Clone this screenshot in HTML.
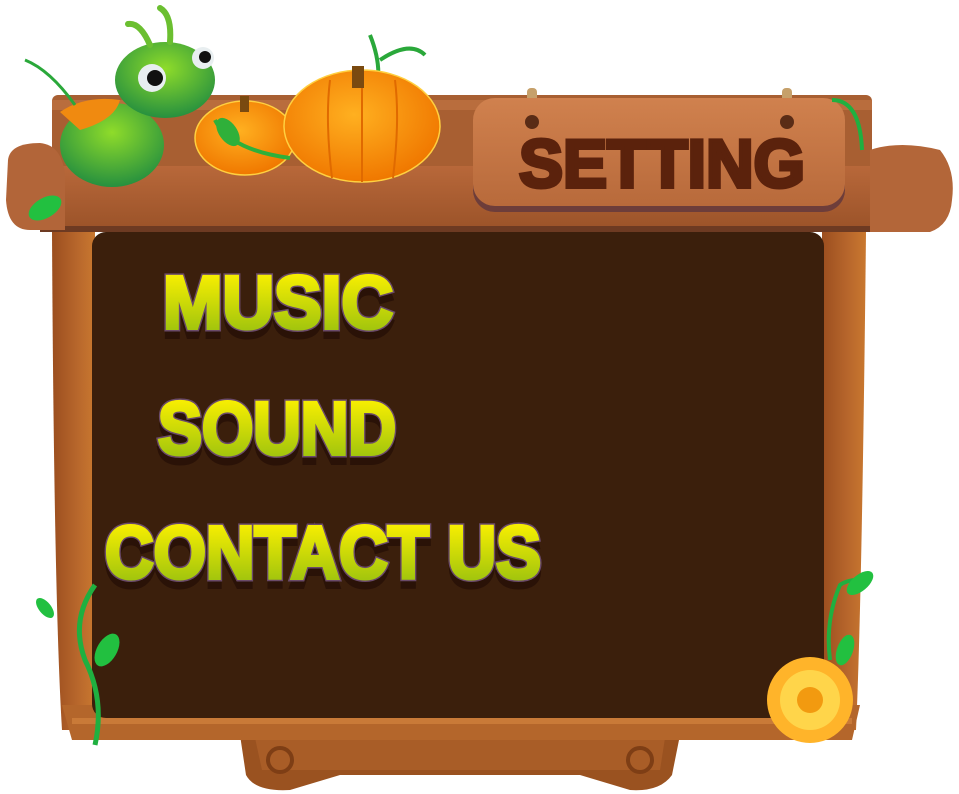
<!DOCTYPE html>
<html><head><meta charset="utf-8"><style>
html,body{margin:0;padding:0;background:#fff;width:959px;height:794px;overflow:hidden}
svg{display:block}
</style></head><body>
<svg width="959" height="794" viewBox="0 0 959 794" xmlns="http://www.w3.org/2000/svg">
<defs>
<linearGradient id="wood" x1="0" y1="0" x2="0" y2="1"><stop offset="0" stop-color="#b8683a"/><stop offset="1" stop-color="#9a5228"/></linearGradient>
<linearGradient id="woodv" x1="0" y1="0" x2="1" y2="0"><stop offset="0" stop-color="#9b4e1f"/><stop offset="0.6" stop-color="#b8672c"/><stop offset="1" stop-color="#c9782f"/></linearGradient>
<linearGradient id="sign" x1="0" y1="0" x2="0" y2="1"><stop offset="0" stop-color="#d0814e"/><stop offset="1" stop-color="#b86a3b"/></linearGradient>
<linearGradient id="txt" x1="0" y1="0" x2="0" y2="1"><stop offset="0.1" stop-color="#fff200"/><stop offset="1" stop-color="#8dbb10"/></linearGradient>
<radialGradient id="pump" cx="0.45" cy="0.4" r="0.6"><stop offset="0" stop-color="#ffb020"/><stop offset="1" stop-color="#f07800"/></radialGradient>
<radialGradient id="cat" cx="0.5" cy="0.35" r="0.7"><stop offset="0" stop-color="#8fdc2a"/><stop offset="1" stop-color="#1e8a40"/></radialGradient>
</defs>

<path d="M240 735 H680 L672 775 Q660 792 630 790 L580 775 H340 L290 790 Q255 792 246 775 Z" fill="#9a5220"/>
<path d="M255 738 H665 L660 770 H262 Z" fill="#a95d27"/>
<circle cx="280" cy="760" r="12" fill="none" stroke="#7e3e15" stroke-width="4"/>
<circle cx="640" cy="760" r="12" fill="none" stroke="#7e3e15" stroke-width="4"/>

<path d="M52 232 H95 V730 H62 Q54 600 52 232 Z" fill="url(#woodv)"/>
<path d="M822 232 H866 Q862 600 856 730 H822 Z" fill="url(#woodv)"/>
<path d="M62 705 H860 L852 740 H72 Z" fill="#b4662b"/>
<rect x="72" y="718" width="780" height="6" fill="#c97a38"/>
<rect x="92" y="232" width="732" height="486" rx="14" fill="#3b1f0c"/>

<rect x="52" y="95" width="820" height="80" rx="6" fill="#a85f32"/>
<rect x="52" y="100" width="820" height="10" fill="#b96d3d"/>
<rect x="40" y="166" width="860" height="66" rx="6" fill="url(#wood)"/>
<rect x="40" y="226" width="860" height="6" fill="#6d3a22"/>
<path d="M8 160 Q10 143 40 143 Q62 145 65 175 V230 H30 Q8 230 6 200 Z" fill="#b26539"/>
<path d="M870 150 Q900 140 940 150 Q956 170 952 200 Q950 225 930 232 H870 Z" fill="#b36639"/>

<rect x="527" y="88" width="10" height="28" rx="4" fill="#c6a06a"/>
<rect x="782" y="88" width="10" height="28" rx="4" fill="#c6a06a"/>
<rect x="473" y="100" width="372" height="112" rx="22" fill="#6d3d3a"/>
<rect x="473" y="98" width="372" height="108" rx="22" fill="url(#sign)"/>
<circle cx="532" cy="122" r="7" fill="#5a2c16"/>
<circle cx="787" cy="122" r="7" fill="#5a2c16"/>
<text x="519" y="187" font-family="Liberation Sans,sans-serif" font-weight="bold" font-size="68" fill="#5b220c" stroke="#5b220c" stroke-width="4" textLength="286" lengthAdjust="spacingAndGlyphs">SETTING</text>

<ellipse cx="112" cy="145" rx="52" ry="42" fill="url(#cat)"/>
<path d="M60 112 Q85 95 120 100 Q115 120 80 130 Z" fill="#f08a10"/>
<ellipse cx="165" cy="80" rx="50" ry="38" fill="url(#cat)"/>
<circle cx="152" cy="78" r="14" fill="#e8eef0"/><circle cx="155" cy="78" r="8" fill="#111"/>
<circle cx="203" cy="58" r="11" fill="#e8eef0"/><circle cx="205" cy="57" r="6" fill="#111"/>
<path d="M150 45 Q140 22 128 24 M170 42 Q172 15 160 8" stroke="#6bbf30" stroke-width="6" fill="none" stroke-linecap="round"/>
<path d="M25 60 Q50 70 75 105" stroke="#2aa83a" stroke-width="3" fill="none"/>

<path d="M370 35 Q380 60 378 80" stroke="#2aa83a" stroke-width="4" fill="none"/>
<path d="M380 60 Q410 40 425 55" stroke="#2aa83a" stroke-width="4" fill="none"/>
<ellipse cx="245" cy="138" rx="50" ry="37" fill="url(#pump)" stroke="#ffd040" stroke-width="1.5"/>
<ellipse cx="362" cy="126" rx="78" ry="56" fill="url(#pump)" stroke="#ffd040" stroke-width="1.5"/>
<path d="M330 80 Q325 120 332 178 M395 80 Q400 120 393 178 M362 72 V182" stroke="#e06a00" stroke-width="2" fill="none"/>
<rect x="352" y="66" width="12" height="22" fill="#7a4a10"/>
<rect x="240" y="96" width="9" height="16" fill="#7a4a10"/>
<path d="M215 120 Q230 150 290 158" stroke="#2fb03a" stroke-width="4" fill="none"/>
<ellipse cx="228" cy="132" rx="9" ry="16" fill="#2fb03a" transform="rotate(-35 228 132)"/>

<path d="M95 585 Q70 620 85 660 Q105 700 95 745" stroke="#1fb040" stroke-width="5" fill="none"/>
<path d="M830 660 Q825 620 840 585 Q850 578 870 580" stroke="#1fb040" stroke-width="4" fill="none"/>
<ellipse cx="107" cy="650" rx="10" ry="18" fill="#22c040" transform="rotate(30 107 650)"/>
<ellipse cx="45" cy="608" rx="6" ry="12" fill="#22c040" transform="rotate(-40 45 608)"/>
<ellipse cx="860" cy="583" rx="8" ry="16" fill="#22c040" transform="rotate(50 860 583)"/>
<ellipse cx="845" cy="650" rx="8" ry="16" fill="#22c040" transform="rotate(20 845 650)"/>
<ellipse cx="45" cy="208" rx="10" ry="18" fill="#22c040" transform="rotate(60 45 208)"/>
<path d="M832 100 Q860 100 862 150" stroke="#1fb040" stroke-width="4" fill="none"/>

<g transform="translate(810 700)">
<circle r="43" fill="#ffb42a"/>
<circle r="30" fill="#ffd54a"/>
<circle r="13" fill="#f29a10"/>
</g>

<g font-family="Liberation Sans,sans-serif" font-weight="bold">
<g fill="#2a1207" stroke="#2a1207" stroke-width="6">
<text x="163" y="336" font-size="74" textLength="230" lengthAdjust="spacingAndGlyphs">MUSIC</text>
<text x="158" y="462" font-size="74" textLength="238" lengthAdjust="spacingAndGlyphs">SOUND</text>
<text x="105" y="586" font-size="74" textLength="436" lengthAdjust="spacingAndGlyphs">CONTACT US</text>
</g>
<g fill="#6a4a6a" stroke="#6a4a6a" stroke-width="7">
<text x="163" y="328" font-size="74" textLength="230" lengthAdjust="spacingAndGlyphs">MUSIC</text>
<text x="158" y="454" font-size="74" textLength="238" lengthAdjust="spacingAndGlyphs">SOUND</text>
<text x="105" y="578" font-size="74" textLength="436" lengthAdjust="spacingAndGlyphs">CONTACT US</text>
</g>
<g fill="url(#txt)" stroke="url(#txt)" stroke-width="4">
<text x="163" y="328" font-size="74" textLength="230" lengthAdjust="spacingAndGlyphs">MUSIC</text>
<text x="158" y="454" font-size="74" textLength="238" lengthAdjust="spacingAndGlyphs">SOUND</text>
<text x="105" y="578" font-size="74" textLength="436" lengthAdjust="spacingAndGlyphs">CONTACT US</text>
</g>
</g>
</svg>
</body></html>
